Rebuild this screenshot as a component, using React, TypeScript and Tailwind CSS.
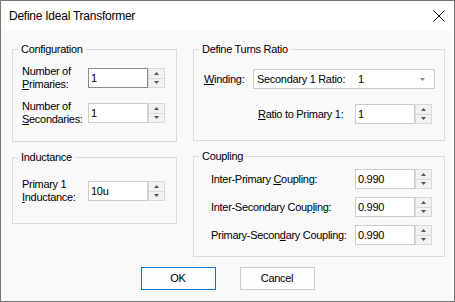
import { ReactNode } from 'react';

const BG = 'bg-[#f9f9f9]';

function Group({
  title,
  className,
  children,
}: {
  title: string;
  className?: string;
  children: ReactNode;
}) {
  return (
    <div className={`relative border border-[#dcdcdc] ${className ?? ''}`}>
      <span className={`absolute -top-[8px] left-[5px] px-[3px] leading-[14px] ${BG}`}>
        {title}
      </span>
      {children}
    </div>
  );
}

function Arrow({ up }: { up?: boolean }) {
  return (
    <svg width="5" height="3" viewBox="0 0 5 3" className="block">
      {up ? (
        <path d="M2.5 0 L5 3 L0 3 Z" fill="#555" />
      ) : (
        <path d="M0 0 L5 0 L2.5 3 Z" fill="#555" />
      )}
    </svg>
  );
}

function Spin({
  value,
  focused = false,
}: {
  value: string;
  focused?: boolean;
}) {
  return (
    <div className="flex h-[20px] items-stretch">
      <div
        className={`flex w-[60px] items-center border bg-white pl-[2px] leading-none ${
          focused ? 'border-[#8c8c8c]' : 'border-[#cccccc]'
        }`}
      >
        {value}
      </div>
      <div className="flex w-[17px] flex-col gap-[1px] bg-[#d9d9d9] p-[1px]">
        <div className="flex flex-1 items-center justify-center bg-[#f2f2f2]">
          <Arrow up />
        </div>
        <div className="flex flex-1 items-center justify-center bg-[#f2f2f2]">
          <Arrow />
        </div>
      </div>
    </div>
  );
}

export default function App() {
  return (
    <div
      className={`flex h-[302px] w-[455px] flex-col border border-[#777] ${BG} font-['Liberation_Sans',Arial,sans-serif] text-[11px] tracking-[-0.3px] text-black`}
    >
      {/* title bar */}
      <div className="flex h-[30px] shrink-0 items-center justify-between bg-white pl-[8px] pr-[9px]">
        <span className="text-[12px] tracking-[-0.25px]">Define Ideal Transformer</span>
        <svg width="12" height="12" viewBox="0 0 12 12">
          <path d="M0.5 0.5 L11.5 11.5 M11.5 0.5 L0.5 11.5" stroke="#000" strokeWidth="1" />
        </svg>
      </div>

      <div className="flex flex-1 flex-col pl-[11px] pt-[18px]">
        <div className="flex gap-[16px]">
          {/* left column */}
          <div className="flex w-[165px] flex-col gap-[15px]">
            <Group title="Configuration" className="h-[93px]">
              <div className="flex flex-col gap-[9px] pl-[9px] pt-[15px]">
                <div className="flex h-[26px] items-center">
                  <div className="w-[66px] leading-[13px]">
                    Number of
                    <br />
                    <u>P</u>rimaries:
                  </div>
                  <Spin value="1" focused />
                </div>
                <div className="flex h-[26px] items-center">
                  <div className="w-[66px] leading-[13px]">
                    Number of
                    <br />
                    <u>S</u>econdaries:
                  </div>
                  <Spin value="1" />
                </div>
              </div>
            </Group>

            <Group title="Inductance" className="h-[67px]">
              <div className="pl-[9px] pt-[20px]">
                <div className="flex h-[26px] items-center">
                  <div className="w-[66px] leading-[13px]">
                    Primary 1
                    <br />
                    <u>I</u>nductance:
                  </div>
                  <Spin value="10u" />
                </div>
              </div>
            </Group>
          </div>

          {/* right column */}
          <div className="flex w-[252px] flex-col gap-[15px]">
            <Group title="Define Turns Ratio" className="h-[92px]">
              <div className="flex flex-col gap-[15px] pt-[19px]">
                <div className="flex h-[20px] items-center pl-[10px]">
                  <div className="w-[49px]">
                    <u>W</u>inding:
                  </div>
                  <div className="flex h-[20px] w-[182px] items-center border border-[#cccccc] bg-white pl-[3px] pr-[9px]">
                    <span className="w-[101px]">Secondary 1 Ratio:</span>
                    <span className="flex-1">1</span>
                    <svg width="5" height="3" viewBox="0 0 5 3">
                      <path d="M0 0 L5 0 L2.5 3 Z" fill="#888" />
                    </svg>
                  </div>
                </div>
                <div className="flex h-[20px] items-center pl-[64px]">
                  <div className="w-[97px]">
                    <u>R</u>atio to Primary 1:
                  </div>
                  <Spin value="1" />
                </div>
              </div>
            </Group>

            <Group title="Coupling" className="h-[101px]">
              <div className="flex flex-col gap-[8px] pl-[17px] pt-[12px]">
                <div className="flex h-[20px] items-center">
                  <div className="w-[144px]">
                    Inter-Primary <u>C</u>oupling:
                  </div>
                  <Spin value="0.990" />
                </div>
                <div className="flex h-[20px] items-center">
                  <div className="w-[144px]">
                    Inter-Secondary Coup<u>l</u>ing:
                  </div>
                  <Spin value="0.990" />
                </div>
                <div className="flex h-[20px] items-center">
                  <div className="w-[144px]">
                    Primary-Secon<u>d</u>ary Coupling:
                  </div>
                  <Spin value="0.990" />
                </div>
              </div>
            </Group>
          </div>
        </div>

        {/* buttons */}
        <div className="mt-[10px] flex justify-center gap-[24px] pr-[11px]">
          <button className="h-[23px] w-[75px] border border-[#0078d7] bg-[#fdfdfd]">OK</button>
          <button className="h-[23px] w-[75px] border border-[#cccccc] bg-[#fdfdfd]">
            Cancel
          </button>
        </div>
      </div>
    </div>
  );
}
